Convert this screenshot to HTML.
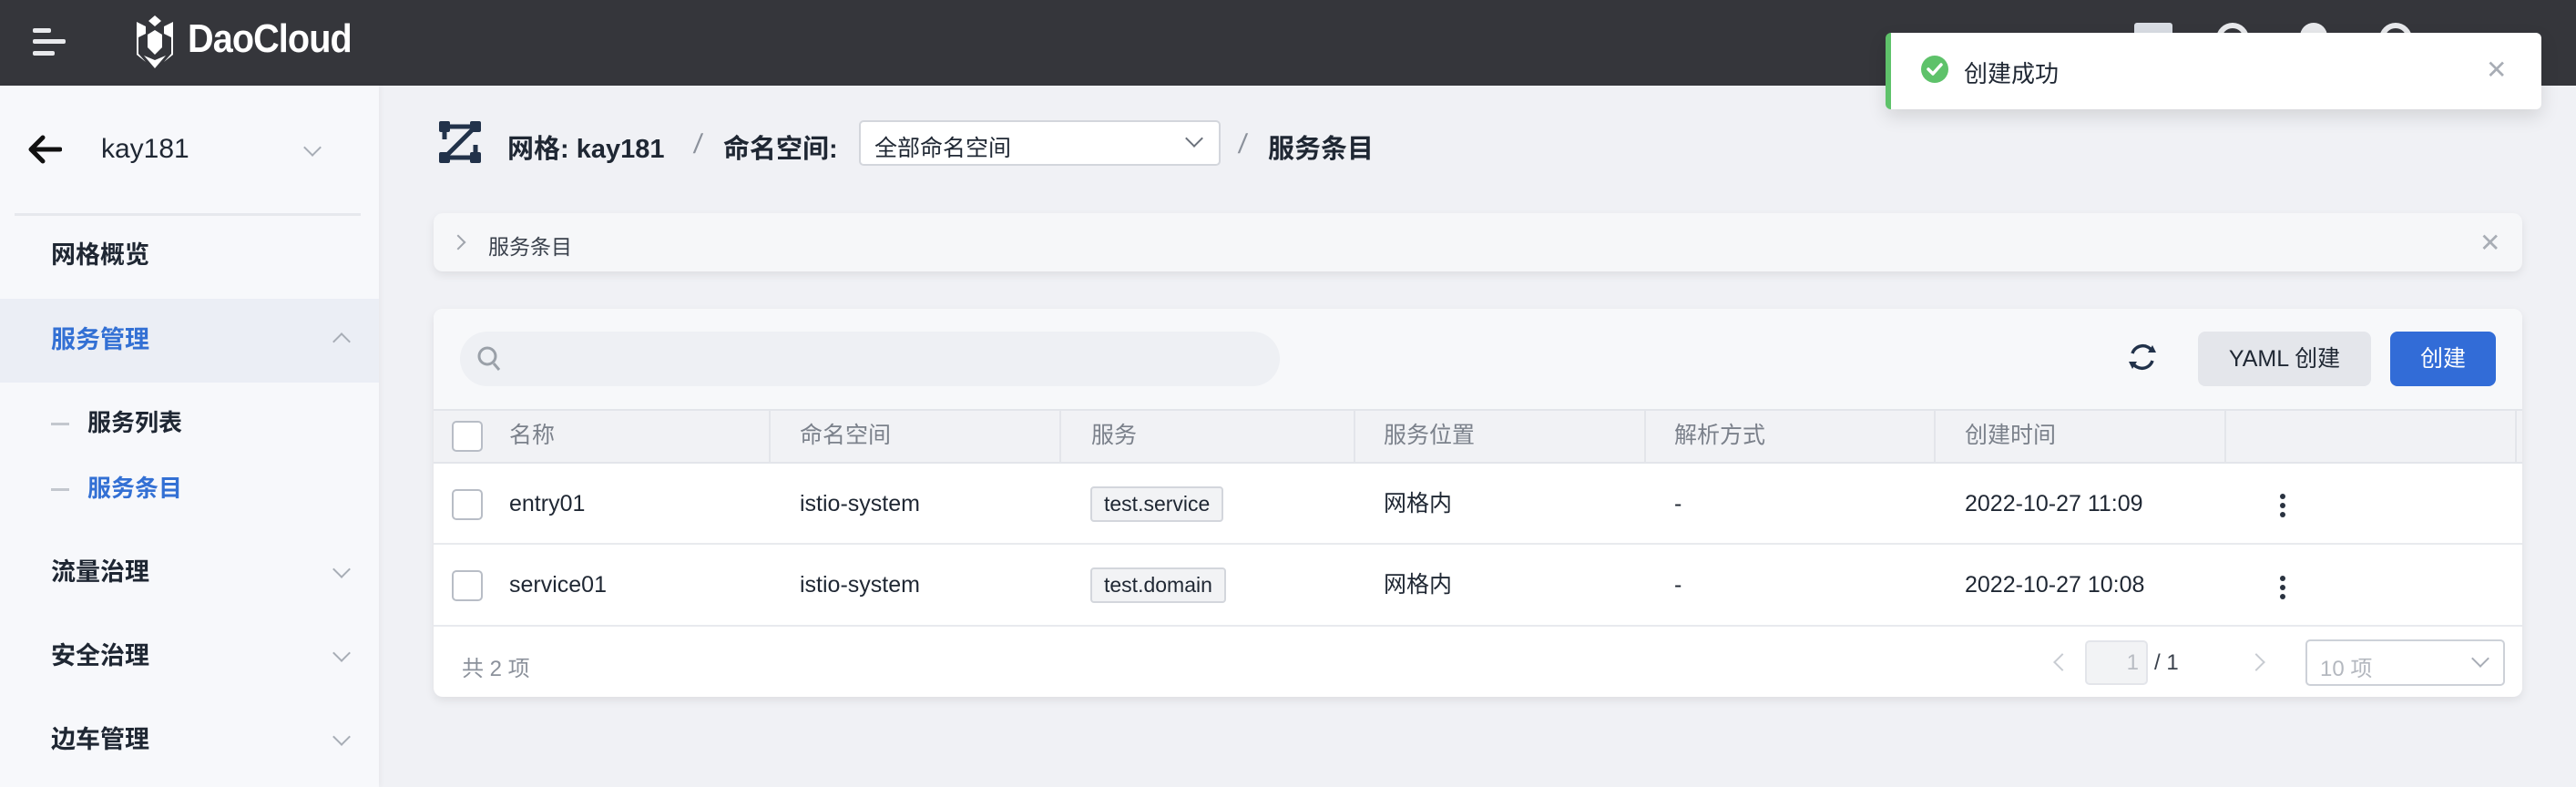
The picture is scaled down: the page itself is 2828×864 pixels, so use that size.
<!DOCTYPE html>
<html><head><meta charset="utf-8"><style>
*{box-sizing:border-box;margin:0;padding:0}
body{width:2828px;height:864px;overflow:hidden;background:#f0f1f5;font-family:"Liberation Sans","Noto Sans CJK SC",sans-serif;color:#1f2733;position:relative}
.a{position:absolute;white-space:nowrap}
.hdr{left:0;top:0;width:2828px;height:94px;background:#35363b}
.side{left:0;top:94px;width:416px;height:770px;background:#f7f8fb;box-shadow:2px 0 6px rgba(0,0,0,.04)}
.mi{font-size:27px;font-weight:bold;color:#1f2733;line-height:1}
.chev{width:14px;height:14px;border-right:2.5px solid #a8adb6;border-bottom:2.5px solid #a8adb6;transform:rotate(45deg)}
.card{background:#fff;border-radius:10px;box-shadow:0 4px 10px rgba(0,0,0,.08)}
.th{font-size:25px;color:#7b818b;line-height:1}
.td{font-size:25px;color:#1f2733;line-height:1}
.cb{width:34px;height:34px;border:2px solid #b8bdc6;border-radius:5px;background:#fff}
.tag{border:2px solid #d3d6dc;background:#f2f3f5;border-radius:4px;font-size:23px;padding:6px 13px;line-height:1}
.dots span{display:block;width:6px;height:6px;border-radius:50%;background:#2a3340;margin:4px 0}
</style></head><body>
<div class="a hdr"></div>
<div class="a" style="left:36px;top:31px;width:20px;height:5px;background:#e8e9ec;border-radius:2px"></div>
<div class="a" style="left:36px;top:43px;width:36px;height:5px;background:#e8e9ec;border-radius:2px"></div>
<div class="a" style="left:36px;top:56px;width:24px;height:5px;background:#e8e9ec;border-radius:2px"></div>
<svg class="a" style="left:142px;top:16px" width="56" height="60" viewBox="0 0 56 60"><path d="M28 1l7 6-7 6-7-6z M8 8l10 5 0 8-8 4 0 18 8 9-10-8 0-36z M48 8l-10 5 0 8 8 4 0 18-8 9 10-8 0-36z M16 45l12 14 12-14-12 5z" fill="#fff"/><path d="M20 22l8-5 8 5 0 14-8 8-8-8z" fill="#fff"/></svg>
<div class="a" style="left:206px;top:18px;font-size:44px;font-weight:bold;color:#fff;letter-spacing:-1px;transform:scaleX(0.9);transform-origin:left">DaoCloud</div>
<div class="a" style="left:2343px;top:25px;width:42px;height:30px;background:#d9dde4;border-radius:3px"></div>
<div class="a" style="left:2433px;top:25px;width:36px;height:36px;border:6px solid #e8e9ec;border-radius:50%"></div>
<div class="a" style="left:2525px;top:25px;width:30px;height:30px;background:#e8e9ec;border-radius:50% 50% 4px 4px"></div>
<div class="a" style="left:2612px;top:25px;width:36px;height:36px;border:6px solid #e8e9ec;border-radius:50%"></div>
<div class="a side"></div>
<svg class="a" style="left:30px;top:148px" width="38" height="32" viewBox="0 0 38 32"><path d="M36 16H5M17 3L4 16l13 13" stroke="#111" stroke-width="5" fill="none" stroke-linecap="round" stroke-linejoin="round"/></svg>
<div class="a" style="left:111px;top:147px;font-size:30px;color:#1f2733">kay181</div>
<div class="a chev" style="left:336px;top:155px"></div>
<div class="a" style="left:16px;top:234px;width:380px;height:3px;background:#e6e8ed"></div>
<div class="a mi" style="left:56px;top:267px">网格概览</div>
<div class="a" style="left:0;top:328px;width:416px;height:92px;background:#ebeef5"></div>
<div class="a mi" style="left:56px;top:360px;color:#3370d4">服务管理</div>
<div class="a chev" style="left:368px;top:368px;transform:rotate(225deg)"></div>
<div class="a" style="left:56px;top:464px;width:20px;height:3px;background:#c3c7ce"></div>
<div class="a mi" style="left:96px;top:451px;font-size:26px">服务列表</div>
<div class="a" style="left:56px;top:536px;width:20px;height:3px;background:#c3c7ce"></div>
<div class="a mi" style="left:96px;top:523px;font-size:26px;color:#3370d4">服务条目</div>
<div class="a mi" style="left:56px;top:615px">流量治理</div>
<div class="a chev" style="left:368px;top:618px"></div>
<div class="a mi" style="left:56px;top:707px">安全治理</div>
<div class="a chev" style="left:368px;top:710px"></div>
<div class="a mi" style="left:56px;top:799px">边车管理</div>
<div class="a chev" style="left:368px;top:802px"></div>
<svg class="a" style="left:482px;top:133px" width="46" height="46" viewBox="0 0 46 46"><rect x="0" y="0" width="12" height="12" rx="2" fill="#22324a"/><rect x="34" y="0" width="12" height="12" rx="2" fill="#22324a"/><rect x="0" y="34" width="12" height="12" rx="2" fill="#22324a"/><rect x="34" y="34" width="12" height="12" rx="2" fill="#22324a"/><path d="M6 6H40M6 40H40M40 6L6 40M6 6V20M40 26V40" stroke="#22324a" stroke-width="5" fill="none"/></svg>
<div class="a" style="left:557px;top:140px;font-size:29px;font-weight:bold;color:#1f2733">网格: kay181</div>
<div class="a" style="left:762px;top:142px;font-size:30px;color:#8b919b;transform:skewX(-8deg)">/</div>
<div class="a" style="left:794px;top:140px;font-size:29px;font-weight:bold;color:#1f2733">命名空间:</div>
<div class="a" style="left:943px;top:132px;width:397px;height:50px;background:#fff;border:2px solid #d3d6dc;border-radius:5px"></div>
<div class="a" style="left:960px;top:143px;font-size:25px;color:#1f2733">全部命名空间</div>
<div class="a chev" style="left:1304px;top:145px;border-color:#6c727c"></div>
<div class="a" style="left:1360px;top:142px;font-size:30px;color:#8b919b;transform:skewX(-8deg)">/</div>
<div class="a" style="left:1392px;top:140px;font-size:29px;font-weight:bold;color:#1f2733">服务条目</div>
<div class="a card" style="left:476px;top:234px;width:2293px;height:64px;background:#f6f7f9"></div>
<div class="a" style="left:497px;top:260px;width:12px;height:12px;border-right:2px solid #a0a5ad;border-top:2px solid #a0a5ad;transform:rotate(45deg)"></div>
<div class="a" style="left:536px;top:252px;font-size:23px;color:#3a414c">服务条目</div>
<div class="a" style="left:2722px;top:250px;font-size:28px;color:#a8adb5">✕</div>
<div class="a card" style="left:476px;top:339px;width:2293px;height:426px;overflow:hidden">
  <div class="a" style="left:0;top:0;width:2293px;height:110px;background:#f7f8fa"></div>
</div>
<div class="a" style="left:505px;top:364px;width:900px;height:60px;background:#eef0f4;border-radius:30px"></div>
<svg class="a" style="left:523px;top:379px" width="28" height="30" viewBox="0 0 28 30"><circle cx="12" cy="12" r="9" stroke="#9aa0a8" stroke-width="3" fill="none"/><path d="M19 20l6 7" stroke="#9aa0a8" stroke-width="3"/></svg>
<svg class="a" style="left:2333px;top:372px" width="38" height="40" viewBox="0 0 38 40"><path d="M8 16A12 12 0 0 1 30 14M30 24A12 12 0 0 1 8 26" stroke="#22324a" stroke-width="3.5" fill="none"/><path d="M25 15l9 0-4-8zM13 25l-9 0 4 8z" fill="#22324a"/></svg>
<div class="a" style="left:2413px;top:364px;width:190px;height:60px;background:#e4e6eb;border-radius:8px;font-size:25px;color:#1f2733;text-align:center;line-height:60px">YAML 创建</div>
<div class="a" style="left:2624px;top:364px;width:116px;height:60px;background:#326cd7;border-radius:8px;font-size:25px;color:#fff;text-align:center;line-height:60px">创建</div>
<div class="a" style="left:476px;top:449px;width:2293px;height:60px;background:#f1f2f5;border-top:2px solid #e3e5ea;border-bottom:2px solid #e3e5ea"></div>
<div class="a" style="left:844px;top:451px;width:2px;height:56px;background:#e3e5ea"></div>
<div class="a" style="left:1163px;top:451px;width:2px;height:56px;background:#e3e5ea"></div>
<div class="a" style="left:1486px;top:451px;width:2px;height:56px;background:#e3e5ea"></div>
<div class="a" style="left:1805px;top:451px;width:2px;height:56px;background:#e3e5ea"></div>
<div class="a" style="left:2123px;top:451px;width:2px;height:56px;background:#e3e5ea"></div>
<div class="a" style="left:2442px;top:451px;width:2px;height:56px;background:#e3e5ea"></div>
<div class="a" style="left:2761px;top:451px;width:2px;height:56px;background:#e3e5ea"></div>
<div class="a cb" style="left:496px;top:462px"></div>
<div class="a th" style="left:559px;top:466px">名称</div>
<div class="a th" style="left:878px;top:466px">命名空间</div>
<div class="a th" style="left:1198px;top:466px">服务</div>
<div class="a th" style="left:1519px;top:466px">服务位置</div>
<div class="a th" style="left:1838px;top:466px">解析方式</div>
<div class="a th" style="left:2157px;top:466px">创建时间</div>
<div class="a cb" style="left:496px;top:537px"></div>
<div class="a td" style="left:559px;top:541px">entry01</div>
<div class="a td" style="left:878px;top:541px">istio-system</div>
<div class="a tag" style="left:1197px;top:534px">test.service</div>
<div class="a td" style="left:1519px;top:541px">网格内</div>
<div class="a td" style="left:1838px;top:541px">-</div>
<div class="a td" style="left:2157px;top:541px">2022-10-27 11:09</div>
<div class="a dots" style="left:2503px;top:538px"><span></span><span></span><span></span></div>
<div class="a" style="left:476px;top:596px;width:2293px;height:2px;background:#e8eaee"></div>
<div class="a cb" style="left:496px;top:626px"></div>
<div class="a td" style="left:559px;top:630px">service01</div>
<div class="a td" style="left:878px;top:630px">istio-system</div>
<div class="a tag" style="left:1197px;top:623px">test.domain</div>
<div class="a td" style="left:1519px;top:630px">网格内</div>
<div class="a td" style="left:1838px;top:630px">-</div>
<div class="a td" style="left:2157px;top:630px">2022-10-27 10:08</div>
<div class="a dots" style="left:2503px;top:628px"><span></span><span></span><span></span></div>
<div class="a" style="left:476px;top:686px;width:2293px;height:2px;background:#e8eaee"></div>
<div class="a" style="left:507px;top:714px;font-size:24px;color:#8b919b">共 2 项</div>
<div class="a" style="left:2257px;top:720px;width:14px;height:14px;border-left:2px solid #c8ccd2;border-bottom:2px solid #c8ccd2;transform:rotate(45deg)"></div>
<div class="a" style="left:2289px;top:703px;width:69px;height:49px;background:#f2f3f5;border:2px solid #e3e5ea;border-radius:5px;font-size:24px;color:#b8bcc3;text-align:right;padding-right:8px;line-height:45px">1</div>
<div class="a" style="left:2365px;top:714px;font-size:24px;color:#3a414c">/ 1</div>
<div class="a" style="left:2470px;top:720px;width:14px;height:14px;border-right:2px solid #c8ccd2;border-top:2px solid #c8ccd2;transform:rotate(45deg)"></div>
<div class="a" style="left:2531px;top:702px;width:219px;height:51px;border:2px solid #cdd1d8;border-radius:5px;background:#fff"></div>
<div class="a" style="left:2547px;top:714px;font-size:24px;color:#b4b8bf">10 项</div>
<div class="a chev" style="left:2716px;top:716px;border-color:#a8adb6"></div>
<div class="a" style="left:2070px;top:36px;width:720px;height:84px;background:#fff;border-radius:6px;border-left:6px solid #5ec26a;box-shadow:0 8px 20px rgba(0,0,0,.12)"></div>
<svg class="a" style="left:2109px;top:61px" width="30" height="30" viewBox="0 0 30 30"><circle cx="15" cy="15" r="15" fill="#5ec26a"/><path d="M8 15l5 5 9-10" stroke="#fff" stroke-width="3.5" fill="none" stroke-linecap="round" stroke-linejoin="round"/></svg>
<div class="a" style="left:2156px;top:61px;font-size:26px;color:#1f2733">创建成功</div>
<div class="a" style="left:2729px;top:60px;font-size:28px;color:#a8adb5">✕</div>
</body></html>
